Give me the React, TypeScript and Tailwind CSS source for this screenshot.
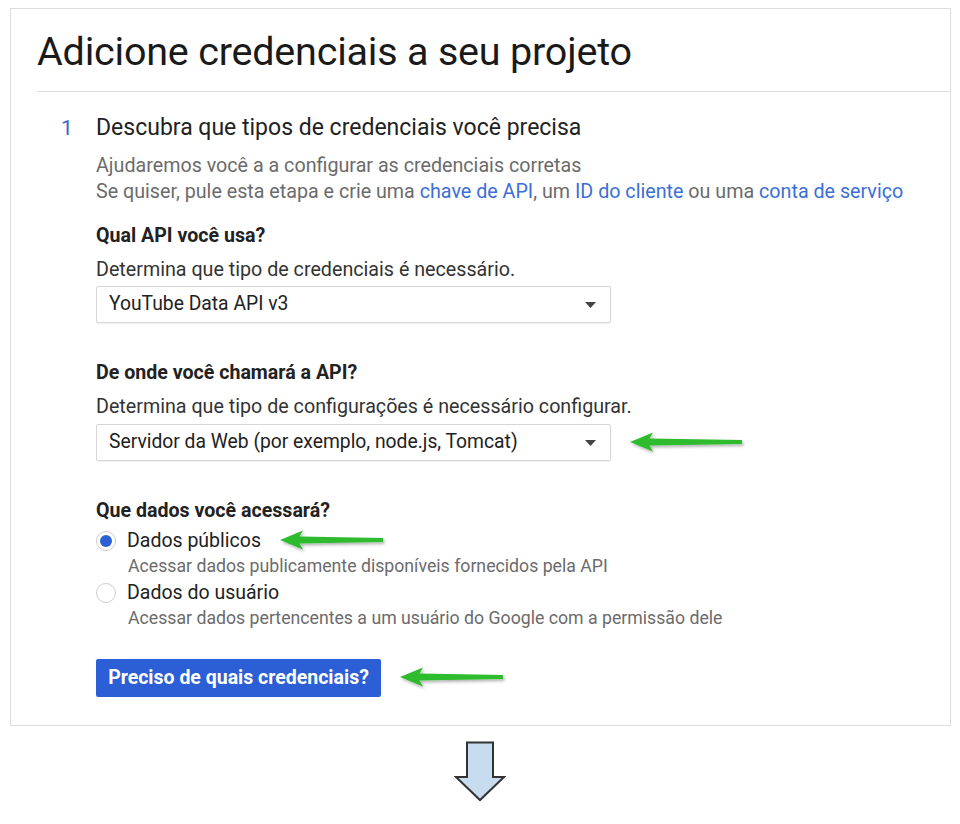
import React from "react";

function GreenArrow({ width }: { width: number }) {
  const w = width;
  return (
    <svg width={w + 4} height="28" viewBox={`0 0 ${w + 4} 28`} className="shrink-0">
      <defs>
        <filter id="sh" x="-10%" y="-50%" width="130%" height="200%">
          <feDropShadow dx="1.5" dy="2" stdDeviation="1.5" floodColor="#000" floodOpacity="0.3" />
        </filter>
      </defs>
      <path
        d={`M1 13 L24 3.5 L20.5 9.5 L${w - 2} 11 L${w - 2} 15 L20.5 16.5 L24 22.5 Z`}
        fill="#2fbb2f"
        filter="url(#sh)"
      />
    </svg>
  );
}

function Select({ value }: { value: string }) {
  return (
    <div className="flex items-center justify-between w-[515px] h-[37px] border border-[#d6d6d6] rounded-[2px] bg-white pl-[12px] pr-[14px] shadow-[0_1px_1px_rgba(0,0,0,0.05)]">
      <span className="text-[19.3px] text-[#222]">{value}</span>
      <svg width="11" height="6" viewBox="0 0 11 6">
        <path d="M0 0 L11 0 L5.5 6 Z" fill="#444" />
      </svg>
    </div>
  );
}

function Radio({ checked }: { checked: boolean }) {
  return (
    <span className="w-[20px] h-[20px] rounded-full border border-[#ccc] bg-white flex items-center justify-center shrink-0">
      {checked && <span className="w-[12px] h-[12px] rounded-full bg-[#2d5fd4]" />}
    </span>
  );
}

export default function App() {
  return (
    <div className="w-[960px] h-[824px] bg-white font-['Roboto',sans-serif] text-[#222] pt-[8px] pl-[10px]">
      <div className="w-[941px] h-[718px] border border-[#dcdcdc]">
        <h1 className="text-[39.5px] leading-[40px] text-[#1a1a1a] pl-[26px] pt-[23px] pb-[19px] tracking-[-0.2px]">
          Adicione credenciais a seu projeto
        </h1>
        <div className="ml-[26px] border-t border-[#dcdcdc]" />
        <div className="flex pl-[50px] pt-[22px]">
          <div className="w-[35px] text-[21px] leading-[28px] text-[#3b66c4]">1</div>
          <div className="flex flex-col">
            <div className="text-[23px] leading-[28px] text-[#222]">
              Descubra que tipos de credenciais você precisa
            </div>
            <div className="mt-[11px] text-[19.7px] leading-[26px] text-[#6b6b6b]">
              <div>Ajudaremos você a a configurar as credenciais corretas</div>
              <div>
                Se quiser, pule esta etapa e crie uma{" "}
                <span className="text-[#3b6fd6]">chave de API</span>, um{" "}
                <span className="text-[#3b6fd6]">ID do cliente</span> ou uma{" "}
                <span className="text-[#3b6fd6]">conta de serviço</span>
              </div>
            </div>

            <div className="mt-[18px] text-[19.6px] font-bold leading-[26px]">Qual API você usa?</div>
            <div className="mt-[8px] text-[19.7px] leading-[26px] text-[#333]">
              Determina que tipo de credenciais é necessário.
            </div>
            <div className="mt-[3px]">
              <Select value="YouTube Data API v3" />
            </div>

            <div className="mt-[37px] text-[19.6px] font-bold leading-[26px]">De onde você chamará a API?</div>
            <div className="mt-[8px] text-[19.7px] leading-[26px] text-[#333]">
              Determina que tipo de configurações é necessário configurar.
            </div>
            <div className="mt-[4px] flex items-center">
              <Select value="Servidor da Web (por exemplo, node.js, Tomcat)" />
              <div className="ml-[18px]">
                <GreenArrow width={115} />
              </div>
            </div>

            <div className="mt-[37px] text-[19.6px] font-bold leading-[26px]">Que dados você acessará?</div>
            <div className="mt-[4px] flex items-center h-[26px]">
              <Radio checked />
              <span className="ml-[11px] text-[19.5px] leading-[26px]">Dados públicos</span>
              <div className="ml-[18px]">
                <GreenArrow width={106} />
              </div>
            </div>
            <div className="pl-[32px] text-[17.7px] leading-[24px] text-[#6b6b6b]">
              Acessar dados publicamente disponíveis fornecidos pela API
            </div>
            <div className="mt-[2px] flex items-center h-[26px]">
              <Radio checked={false} />
              <span className="ml-[11px] text-[19.5px] leading-[26px]">Dados do usuário</span>
            </div>
            <div className="pl-[32px] text-[17.7px] leading-[24px] text-[#6b6b6b]">
              Acessar dados pertencentes a um usuário do Google com a permissão dele
            </div>

            <div className="mt-[29px] flex items-center">
              <button className="h-[38px] w-[285px] rounded-[2px] bg-[#2c5ed6] text-white text-[19.5px] font-bold">
                Preciso de quais credenciais?
              </button>
              <div className="ml-[18px]">
                <GreenArrow width={106} />
              </div>
            </div>
          </div>
        </div>
      </div>
      <div className="flex justify-center pt-[15px] pr-[10px]">
        <svg width="52" height="62" viewBox="0 0 52 62">
          <path
            d="M13 1.5 L39 1.5 L39 36 L50 36 L26 59 L2 36 L13 36 Z"
            fill="#c8dcf0"
            stroke="#333"
            strokeWidth="2"
            strokeLinejoin="miter"
          />
        </svg>
      </div>
    </div>
  );
}
